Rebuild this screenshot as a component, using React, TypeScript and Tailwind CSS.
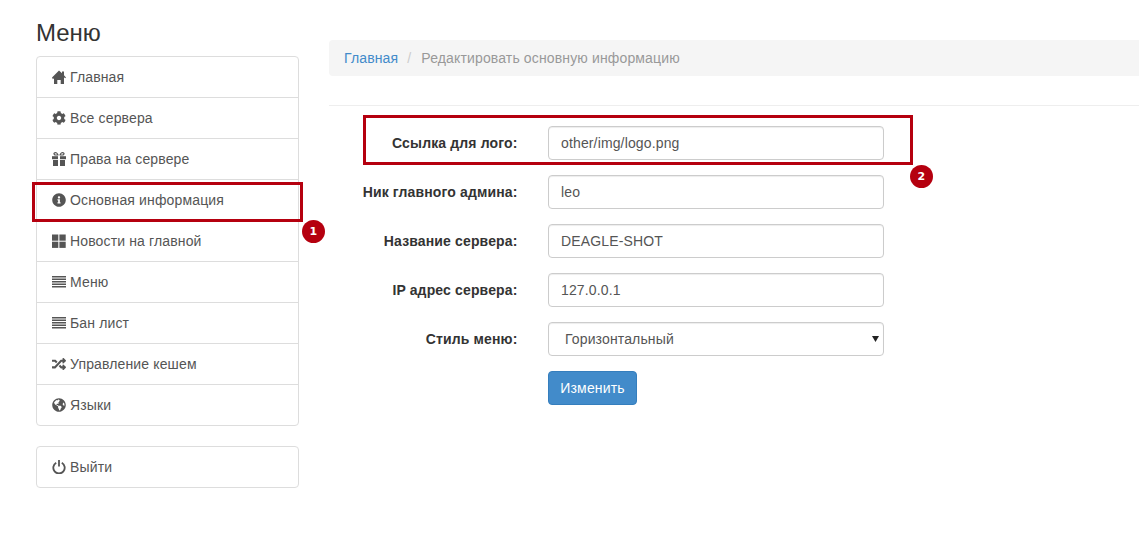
import { FaCog, FaInfoCircle, FaRandom, FaGlobeAmericas } from "react-icons/fa";
import type { ComponentType } from "react";

type IconProps = { className?: string };

interface MenuItem {
  label: string;
  icon: ComponentType<IconProps>;
}

// glyphicons are not in the icon packages, so the ones that differ are drawn here
function HomeIcon({ className }: IconProps) {
  return (
    <svg className={className} viewBox="0 0 14 14" fill="currentColor">
      <path d="M7 .5 10 3.300V1.500h2v3.700l2 2.300-.9.700-1.100-1V14H8.700v-4H5.300v4H2V8.200l-1.100 1L0 7.500z" />
    </svg>
  );
}

function GiftIcon({ className }: IconProps) {
  return (
    <svg className={className} viewBox="0 0 14 14" fill="currentColor">
      <path fillRule="evenodd" d="M3.500 0C2 0 1.200 1 1.400 2c.2.9.9 1.500 2 1.500h3.100V2.600C5.600 1 4.700 0 3.500 0zm.1 1.200c.6 0 1.100.6 1.500 1.200H3.500c-.5 0-.9-.2-.9-.6s.4-.6 1-.6zM10.500 0C9.300 0 8.400 1 7.500 2.600v.9h3.100c1.100 0 1.800-.6 2-1.500C12.800 1 12 0 10.500 0zm-.1 1.200c.6 0 1 .2 1 .6s-.4.6-.9.6H8.900c.4-.6.9-1.200 1.500-1.200z" />
      <rect x="0" y="4.200" width="6" height="3" />
      <rect x="8" y="4.200" width="6" height="3" />
      <rect x="1" y="8" width="5" height="6" />
      <rect x="8" y="8" width="5" height="6" />
    </svg>
  );
}

function GridIcon({ className }: IconProps) {
  return (
    <svg className={className} viewBox="0 0 14 14" fill="currentColor">
      <rect x="0" y="0.500" width="6.300" height="6.200" />
      <rect x="7.400" y="0.500" width="6.300" height="6.200" />
      <rect x="0" y="7.700" width="6.300" height="6.200" />
      <rect x="7.400" y="7.700" width="6.300" height="6.200" />
    </svg>
  );
}

function LinesIcon({ className }: IconProps) {
  return (
    <svg className={className} viewBox="0 0 14 14" fill="currentColor">
      <rect x="0" y="1" width="14" height="1.500" />
      <rect x="0" y="3.500" width="14" height="1.500" />
      <rect x="0" y="6" width="14" height="1.500" />
      <rect x="0" y="8.500" width="14" height="1.500" />
      <rect x="0" y="11" width="14" height="1.500" />
    </svg>
  );
}

function PowerIcon({ className }: IconProps) {
  return (
    <svg className={className} viewBox="0 0 14 14" fill="none" stroke="currentColor" strokeWidth="1.800">
      <path d="M4.200 2.800a5.700 5.700 0 1 0 5.600 0" />
      <path d="M7 0v6.500" />
    </svg>
  );
}

const menuItems: MenuItem[] = [
  { label: "Главная", icon: HomeIcon },
  { label: "Все сервера", icon: FaCog },
  { label: "Права на сервере", icon: GiftIcon },
  { label: "Основная информация", icon: FaInfoCircle },
  { label: "Новости на главной", icon: GridIcon },
  { label: "Меню", icon: LinesIcon },
  { label: "Бан лист", icon: LinesIcon },
  { label: "Управление кешем", icon: FaRandom },
  { label: "Языки", icon: FaGlobeAmericas },
];

const fields = [
  { label: "Ссылка для лого:", value: "other/img/logo.png" },
  { label: "Ник главного админа:", value: "leo" },
  { label: "Название сервера:", value: "DEAGLE-SHOT" },
  { label: "IP адрес сервера:", value: "127.0.0.1" },
];

function MenuRow({ item, last }: { item: MenuItem; last: boolean }) {
  const Icon = item.icon;
  return (
    <a className={`flex items-center pl-[15px] text-[#555] ${last ? "h-[40px]" : "h-[41px] border-b border-[#ddd]"}`}>
      <span className="flex w-[18px] shrink-0 items-center">
        <Icon className="h-[14px] w-[14px]" />
      </span>
      {item.label}
    </a>
  );
}

function Badge({ n, className }: { n: number; className: string }) {
  return (
    <span className={`absolute flex h-[23px] w-[23px] items-center justify-center rounded-full bg-[#b5000f] text-[11px] font-bold text-white font-['DejaVu_Sans',sans-serif] ${className}`}>
      {n}
    </span>
  );
}

export default function App() {
  return (
    <div className="relative h-[560px] w-[1139px] overflow-hidden bg-white font-['Liberation_Sans',Arial,sans-serif] text-[14px] leading-[20px] tracking-[0.14px] text-[#333]">
      <div className="flex">
        <aside className="ml-[36px] w-[263px] shrink-0">
          <h3 className="mt-[20px] mb-[10px] text-[24px] leading-[26px] font-normal tracking-normal">Меню</h3>
          <div className="rounded-[4px] border border-[#ddd]">
            {menuItems.map((item, i) => (
              <MenuRow key={item.label} item={item} last={i === menuItems.length - 1} />
            ))}
          </div>
          <div className="mt-[20px] rounded-[4px] border border-[#ddd]">
            <MenuRow item={{ label: "Выйти", icon: PowerIcon }} last />
          </div>
        </aside>

        <main className="ml-[30px] mr-[-20px] flex-1">
          <div className="mt-[40px] flex h-[36px] items-center rounded-[4px] bg-[#f5f5f5] px-[15px]">
            <a className="text-[#428bca]">Главная</a>
            <span className="pr-[10px] pl-[9px] text-[#ccc]">/</span>
            <span className="text-[#999]">Редактировать основную информацию</span>
          </div>
          <hr className="mt-[29px] mb-[20px] border-t border-[#eee]" />

          <form className="flex flex-col gap-[15px]">
            {fields.map((f) => (
              <div key={f.label} className="flex items-center">
                <label className="w-[188.500px] text-right font-bold">{f.label}</label>
                <input
                  readOnly
                  value={f.value}
                  className="ml-[30.500px] h-[34px] w-[336px] rounded-[4px] border border-[#ccc] px-[12px] text-[#555] shadow-[inset_0_1px_1px_rgba(0,0,0,0.075)] outline-none"
                />
              </div>
            ))}
            <div className="flex items-center">
              <label className="w-[188.500px] text-right font-bold">Стиль меню:</label>
              <div className="relative ml-[30.500px] w-[336px]">
                <select className="h-[34px] w-full appearance-none rounded-[4px] border border-[#ccc] bg-white pl-[16px] text-[#555] shadow-[inset_0_1px_1px_rgba(0,0,0,0.075)] outline-none">
                  <option>Горизонтальный</option>
                </select>
                <svg className="pointer-events-none absolute top-[14px] right-[5px] h-[6px] w-[7px]" viewBox="0 0 7 6">
                  <path d="M0 0h7L3.500 6z" fill="#222" />
                </svg>
              </div>
            </div>
            <div className="ml-[219px]">
              <button type="button" className="h-[34px] w-[89px] rounded-[4px] border border-[#357ebd] bg-[#428bca] text-white">
                Изменить
              </button>
            </div>
          </form>
        </main>
      </div>

      {/* annotations over the page */}
      <div className="absolute top-[182px] left-[32px] h-[40px] w-[271px] border-[3px] border-[#b5000f]" />
      <Badge n={1} className="top-[220px] left-[302px]" />
      <div className="absolute top-[115px] left-[363px] h-[50px] w-[550px] border-[3px] border-[#b5000f]" />
      <Badge n={2} className="top-[165px] left-[910px]" />
    </div>
  );
}
